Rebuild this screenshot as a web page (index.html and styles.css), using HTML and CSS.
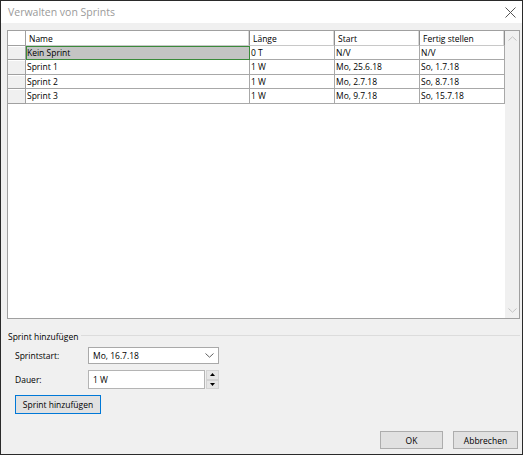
FILE: index.html
```html
<!DOCTYPE html>
<html lang="de">
<head>
<meta charset="utf-8">
<title>Verwalten von Sprints</title>
<link rel="stylesheet" href="styles.css">
</head>
<body>
<div class="window">
  <div class="titlebar">
    <span class="title">Verwalten von Sprints</span>
    <svg class="close" width="11" height="11" viewBox="0 0 11 11"><path d="M0.5 0.5 L10.5 10.5 M10.5 0.5 L0.5 10.5" stroke="#555" stroke-width="1" fill="none"/></svg>
  </div>
  <div class="body">
    <div class="grid">
      <div class="grid-main">
        <div class="table">
          <div class="rh hd"></div><div class="hd">Name</div><div class="hd">Länge</div><div class="hd">Start</div><div class="hd">Fertig stellen</div>
          <div class="rh"></div><div class="cell sel">Kein Sprint</div><div class="cell">0 T</div><div class="cell">N/V</div><div class="cell">N/V</div>
          <div class="rh"></div><div class="cell">Sprint 1</div><div class="cell">1 W</div><div class="cell">Mo, 25.6.18</div><div class="cell">So, 1.7.18</div>
          <div class="rh"></div><div class="cell">Sprint 2</div><div class="cell">1 W</div><div class="cell">Mo, 2.7.18</div><div class="cell">So, 8.7.18</div>
          <div class="rh"></div><div class="cell">Sprint 3</div><div class="cell">1 W</div><div class="cell">Mo, 9.7.18</div><div class="cell">So, 15.7.18</div>
        </div>
      </div>
      <div class="vscroll">
        <div class="arrow"><svg width="9" height="5" viewBox="0 0 9 5"><path d="M0.5 4.5 L4.5 0.8 L8.5 4.5" stroke="#c2c2c2" fill="none"/></svg></div>
        <div class="arrow"><svg width="9" height="5" viewBox="0 0 9 5"><path d="M0.5 0.5 L4.5 4.2 L8.5 0.5" stroke="#c2c2c2" fill="none"/></svg></div>
      </div>
    </div>

    <div class="group-head"><span class="group-label">Sprint hinzufügen</span><div class="rule"></div></div>

    <div class="form-row row-start">
      <span class="label">Sprintstart:</span>
      <div class="combo"><span>Mo, 16.7.18</span><svg width="9" height="5" viewBox="0 0 9 5"><path d="M0.5 0.5 L4.5 4.2 L8.5 0.5" stroke="#606060" fill="none"/></svg></div>
    </div>
    <div class="form-row row-dauer">
      <span class="label">Dauer:</span>
      <div class="textbox">1 W</div>
      <div class="spin">
        <div class="spin-btn"><svg width="5" height="3" viewBox="0 0 5 3"><path d="M0 3 L2.5 0 L5 3 Z" fill="#000"/></svg></div>
        <div class="spin-btn"><svg width="5" height="3" viewBox="0 0 5 3"><path d="M0 0 L5 0 L2.5 3 Z" fill="#000"/></svg></div>
      </div>
    </div>
    <div class="add-row"><button class="btn btn-focus">Sprint hinzufügen</button></div>

    <div class="footer">
      <button class="btn btn-ok">OK</button>
      <button class="btn btn-cancel">Abbrechen</button>
    </div>
  </div>
</div>
</body>
</html>
```
FILE: styles.css
```css
html, body {
  margin: 0;
  padding: 0;
  background: #ffffff;
}
body {
  font-family: "Open Sans", "Noto Sans", sans-serif;
  font-size: 8.5px;
  color: #000;
}
.window {
  box-sizing: border-box;
  width: 523px;
  height: 455px;
  border: 1px solid #2a2a2a;
  background: #f0f0f0;
  display: flex;
  flex-direction: column;
}
.titlebar {
  height: 22px;
  background: #ffffff;
  display: flex;
  align-items: center;
  justify-content: space-between;
  padding: 0 6px 0 7px;
}
.title {
  font-size: 10.5px;
  color: #9a9a9a;
  line-height: 22px;
}
.close { display: block; }

.body {
  flex: 1;
  display: flex;
  flex-direction: column;
  padding: 7px 0 0 6px;
}
.grid {
  box-sizing: border-box;
  width: 513px;
  height: 289px;
  border: 1px solid #a0a0a0;
  display: flex;
  background: #fff;
}
.grid-main {
  flex: 1;
  background: #fff;
}
.table {
  display: grid;
  grid-template-columns: 18px 224px 85px 85px 85px;
  grid-template-rows: 15px 14px 15px 14px 15px;
}
.table > div {
  box-sizing: border-box;
  border-right: 1px solid #a8a8a8;
  border-bottom: 1px solid #a8a8a8;
  white-space: nowrap;
  overflow: hidden;
  line-height: 13px;
}
.hd {
  background: #fff;
  padding-left: 3px;
  border-right: 1px solid #8f8f8f !important;
  box-shadow: inset -1px 0 0 #d8d8d8;
  border-bottom: 1px solid #c8c8c8 !important;
  line-height: 15px !important;
}
.rh {
  background: #f0f0f0;
  border-right: 1px solid #a0a0a0 !important;
  border-bottom: 1px solid #a0a0a0 !important;
  box-shadow: inset 0 1px 0 #ffffff;
}
.rh.hd { background: #fff; }
.cell {
  padding-left: 1px;
  background: #fff;
}
.cell.sel {
  background: #c4c4c4;
  outline: 1px solid #3b8a3b;
  outline-offset: -1px;
  position: relative;
}
.vscroll {
  width: 14px;
  background: #f0f0f0;
  display: flex;
  flex-direction: column;
  justify-content: space-between;
}
.vscroll .arrow {
  height: 15px;
  display: flex;
  align-items: center;
  justify-content: center;
}
.vscroll .arrow svg { display: block; }

.group-head {
  margin-top: 12px;
  height: 12px;
  display: flex;
  align-items: center;
  padding-left: 1px;
}
.group-label {
  line-height: 12px;
  white-space: nowrap;
}
.rule {
  flex: 1;
  height: 1px;
  background: #dcdcdc;
  margin: -3px 2px 0 3px;
}

.form-row {
  display: flex;
  align-items: center;
  padding-left: 8px;
}
.label {
  width: 73px;
}
.row-start { margin-top: 4px; }
.row-dauer { margin-top: 6px; }
.combo {
  box-sizing: border-box;
  width: 131px;
  height: 17px;
  border: 1px solid #a9a9a9;
  background: #fff;
  display: flex;
  align-items: center;
  justify-content: space-between;
  padding: 0 4px 0 4px;
}
.combo svg { display: block; }
.textbox {
  box-sizing: border-box;
  width: 117px;
  height: 19px;
  border: 1px solid #b4b4b4;
  background: #fff;
  padding-left: 4px;
  line-height: 17px;
}
.spin {
  margin-left: 1px;
  width: 13px;
  height: 19px;
  display: flex;
  flex-direction: column;
}
.spin-btn {
  box-sizing: border-box;
  flex: 1;
  background: #e6e6e6;
  border: 1px solid #d2d2d2;
  display: flex;
  align-items: center;
  justify-content: center;
}
.spin-btn svg { display: block; }

.btn {
  box-sizing: border-box;
  height: 19px;
  border: 1px solid #adadad;
  background: #e1e1e1;
  font-family: "Open Sans", "Noto Sans", sans-serif;
  font-size: 8.5px;
  color: #000;
  padding: 0;
  margin: 0;
}
.add-row {
  margin-top: 6px;
  padding-left: 8px;
}
.btn-focus {
  width: 86px;
  border-color: #0078d7;
}
.footer {
  margin-top: 17px;
  display: flex;
  justify-content: flex-end;
  gap: 10px;
  padding-right: 4px;
}
.btn-ok { width: 63px; height: 18px; }
.btn-cancel { width: 65px; height: 18px; }
```
